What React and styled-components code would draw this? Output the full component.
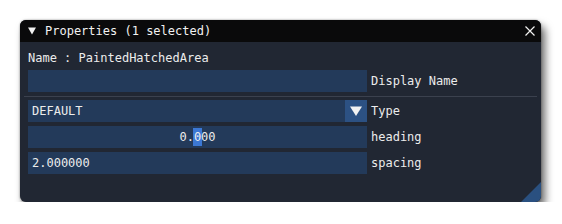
import React from "react";
import styled, { createGlobalStyle } from "styled-components";

const Global = createGlobalStyle`
  html, body { margin: 0; padding: 0; background: #ffffff; }
  body { font-family: "DejaVu Sans Mono", "Liberation Mono", monospace; }
`;

const Page = styled.div`
  padding: 20px 0 0 20px;
`;

const Window = styled.div`
  position: relative;
  width: 521px;
  height: 182px;
  border-radius: 6px;
  overflow: hidden;
  background: #212733;
  box-shadow: 4px 6px 8px rgba(0, 0, 0, 0.6), 0 0 2px rgba(0, 0, 0, 0.45);
  display: flex;
  flex-direction: column;
  color: #ececec;
  font-size: 12px;
`;

const TitleBar = styled.div`
  height: 22px;
  flex: none;
  background: #0a0a0b;
  display: flex;
  align-items: center;
  padding: 0 6px 0 8px;
  color: #f2f2f2;
`;

const Title = styled.span`
  flex: 1;
  line-height: 22px;
  white-space: pre;
`;

const Arrow = styled.svg`
  width: 8px;
  height: 8px;
  margin-right: 9px;
  flex: none;
`;

const CloseBtn = styled.svg`
  width: 10px;
  height: 10px;
  flex: none;
`;

const Body = styled.div`
  flex: 1;
  padding: 9px 8px 0 8px;
  display: flex;
  flex-direction: column;
  gap: 4px;
`;

const TextLine = styled.div`
  height: 15px;
  line-height: 15px;
  white-space: pre;
`;

const Row = styled.div`
  display: flex;
  align-items: center;
  gap: 4px;
  height: 22px;
`;

const Field = styled.div`
  width: 339px;
  height: 22px;
  flex: none;
  background: #233a5a;
  display: flex;
  align-items: center;
  justify-content: ${(p) => (p.$center ? "center" : "flex-start")};
  padding: 0 ${(p) => (p.$center ? "0" : "4px")};
  box-sizing: border-box;
  white-space: pre;
  line-height: 22px;
`;

const ComboText = styled.span`
  flex: 1;
  padding-left: 4px;
`;

const ComboButton = styled.div`
  width: 22px;
  height: 22px;
  flex: none;
  background: #2c5183;
  display: flex;
  align-items: center;
  justify-content: center;
`;

const Combo = styled(Field)`
  padding: 0;
`;

const Label = styled.span`
  white-space: pre;
`;

const Separator = styled.div`
  height: 1px;
  margin: 0 -4px -1px -4px;
  background: #3b414e;
  flex: none;
`;

const Selected = styled.span`
  display: inline-block;
  background: #3c78d4;
  line-height: 18px;
  padding: 0 1px;
  margin: 0 -1px;
`;

const Grip = styled.svg`
  position: absolute;
  right: 0;
  bottom: 0;
  width: 20px;
  height: 20px;
`;

export default function App() {
  return (
    <>
      <Global />
      <Page>
        <Window>
          <TitleBar>
            <Arrow viewBox="0 0 8 8">
              <polygon points="0,0.5 8,0.5 4,7.5" fill="#f2f2f2" />
            </Arrow>
            <Title>Properties (1 selected)</Title>
            <CloseBtn viewBox="0 0 10 10">
              <path d="M0.5 0.5 L9.5 9.5 M9.5 0.5 L0.5 9.5" stroke="#f2f2f2" strokeWidth="1.2" />
            </CloseBtn>
          </TitleBar>
          <Body>
            <TextLine>Name : PaintedHatchedArea</TextLine>
            <Row>
              <Field />
              <Label>Display Name</Label>
            </Row>
            <Separator />
            <Row>
              <Combo>
                <ComboText>DEFAULT</ComboText>
                <ComboButton>
                  <svg width="12" height="10" viewBox="0 0 12 10">
                    <polygon points="0,0.5 12,0.5 6,10" fill="#f2f2f2" />
                  </svg>
                </ComboButton>
              </Combo>
              <Label>Type</Label>
            </Row>
            <Row>
              <Field $center>
                <span>0.</span>
                <Selected>0</Selected>
                <span>00</span>
              </Field>
              <Label>heading</Label>
            </Row>
            <Row>
              <Field>2.000000</Field>
              <Label>spacing</Label>
            </Row>
          </Body>
          <Grip viewBox="0 0 20 20">
            <polygon points="20,0 20,20 0,20" fill="#2a5080" />
          </Grip>
        </Window>
      </Page>
    </>
  );
}
